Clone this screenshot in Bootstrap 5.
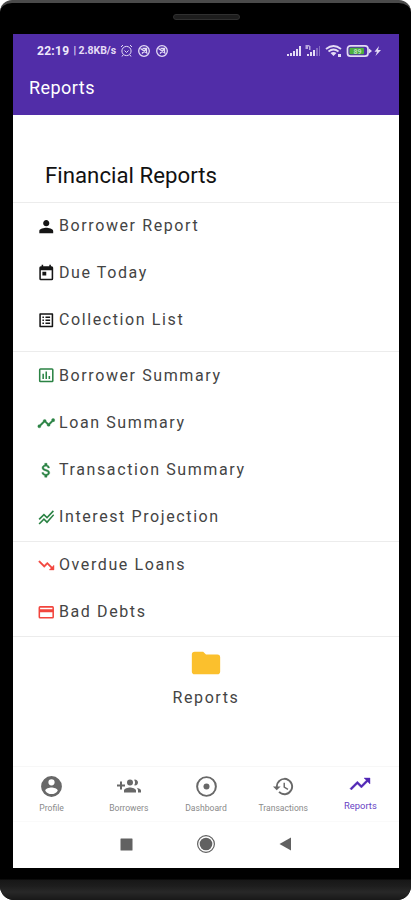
<!DOCTYPE html>
<html lang="en">
<head>
<meta charset="utf-8">
<meta name="viewport" content="width=device-width, initial-scale=1">
<title>Reports</title>
<link href="https://cdn.jsdelivr.net/npm/bootstrap@5.3.0/dist/css/bootstrap.min.css" rel="stylesheet">
<style>
body{font-family:Roboto,"Liberation Sans",sans-serif;background:#fff;color:#111}
svg{display:block;flex:none;fill:currentColor}
.phone{width:411px;height:900px;background:#000;border-radius:12px 12px 14px 14px;border-top:3px solid #4a4a4a;padding:0 12px 0 13px}
.earpiece{height:31px;padding-top:11px}
.speaker{width:67px;height:6px;border-radius:3px;background:#1d1d1d;border:1px solid #303030}
.screen{height:834px}
.app-head{height:81px;background:#512da8;color:#fff}
.status{height:33px;padding:0 18px 0 24px;color:#e4dcf5}
.clock{font-size:12px;font-weight:700;letter-spacing:.3px;color:#eee8fa}
.rate{font-size:10.5px;font-weight:700;letter-spacing:-.05px}
.app-title{font-size:18px;line-height:22px;padding:10px 16px 0;letter-spacing:.45px;font-weight:400;color:#fff}
.section-title{height:87.5px;padding:49px 32px 0;font-size:22.2px;line-height:22px;letter-spacing:.03px;margin:0;font-weight:400;border-bottom:1px solid #ececec}
.group{border-bottom:1px solid #ececec}
.group-a{height:149px}
.group-b{height:190px;padding-top:.6px}
.group-c{height:95px}
.line-item{height:47.2px;padding-left:24px;font-size:16px;letter-spacing:1.6px;color:#444}
.line-item svg{width:18.5px;height:18.5px;margin-right:3.5px}
.green{color:#2b8344}.red{color:#f2453d}.ink{color:#151515}
.folder-box{height:129px;padding-top:9px;font-size:16px;letter-spacing:1.6px;color:#444}
.folder-box svg{color:#fbc02d}
.folder-box span{line-height:20px;margin-top:8px}
.tabs{height:56px;border-top:1px solid #f7f7f7;border-bottom:1px solid #fafafa;color:#686868;font-size:8.6px}
.tabs .tab{flex:1 1 0;padding-top:7px}
.tabs .tab span{line-height:10px;margin-top:4px;color:#8a8a8a}
.tabs .tab.on{color:#5127b5;font-size:9.4px;padding-top:5px}
.tabs .tab.on span{color:#6743c4;margin-top:5px}
.sysnav{height:45px;color:#616161;padding:0 107px}
.chin{height:32px;margin:0 -12px 0 -13px;border-radius:0 0 14px 14px;background:linear-gradient(#000 0 11px,#171717 12px,#1d1d1d 18px,#282828 24px,#181818 32px)}
</style>
</head>
<body>
<div class="phone">
  <div class="earpiece d-flex justify-content-center"><div class="speaker"></div></div>
  <main class="screen bg-white d-flex flex-column">
    <header class="app-head">
      <div class="status d-flex align-items-center">
        <span class="clock">22:19</span><span class="rate ms-1">| 2.8KB/s</span>
        <svg class="ms-1" width="13" height="13" viewBox="0 0 13 13" style="fill:none" stroke="currentColor"><circle cx="6.5" cy="7" r="4.6"/><path d="M1 3l2-2M12 3l-2-2M4.500 6.500l2 2 2-2M3 11l-1 1.500M10 11l1 1.500"/></svg>
        <svg class="ms-1" width="14" height="14" viewBox="0 0 14 14" style="fill:none" stroke="currentColor" stroke-width="1.3"><circle cx="7" cy="7" r="5.3"/><path d="M3.500 4.500l7 5M5.500 4.500h4v4M8.800 5.500L5 9.500"/></svg>
        <svg class="ms-1" width="14" height="14" viewBox="0 0 14 14" style="fill:none" stroke="currentColor" stroke-width="1.3"><circle cx="7" cy="7" r="5.3"/><path d="M3.500 4.500l7 5M5.500 4.500h4v4M8.800 5.500L5 9.500"/></svg>
        <svg class="ms-auto" width="94" height="14" viewBox="0 0 94 14">
          <path d="M0 10h2v2H0zM3 9h2v3H3zM6 7h2v5H6zM9 5h2v7H9zM12 2h2v10h-2zM20 10h2v2h-2zM23 8h2v4h-2zM26 6h2v6h-2z"/>
          <path d="M29 4h2v8h-2zM32 2h1v10h-1z" opacity=".35"/>
          <path d="M18.500 1h4v1.500h-1.500V5h-2.500zM22 2h1.500v4H22z" opacity=".7"/>
          <path d="M39 5q7.500-6 15 0M41.500 7.500q5-4 10 0" fill="none" stroke="currentColor" stroke-width="1.800"/><path d="M43.500 9q3-2 6 0l-3 3zM51 10h3v3h-3z"/>
          <rect x="60.500" y="1.800" width="20.500" height="10.400" rx="3" fill="none" stroke="currentColor" stroke-width="1.700"/><path d="M82 4.500l3 2.500-3 2.500z"/>
          <rect x="62.500" y="3.700" width="14.500" height="6.600" rx="1" fill="#4caf3f"/><text x="66.500" y="9.500" font-size="7" font-weight="700" fill="#b9dfbb">89</text>
          <path d="M92 2l-4.500 5.700H90L88.500 12l5.500-6h-3z"/>
        </svg>
      </div>
      <div class="app-title">Reports</div>
    </header>

    <h1 class="section-title">Financial Reports</h1>

    <section class="group group-a">
      <div class="line-item d-flex align-items-center"><svg class="ink" viewBox="0 0 24 24"><path d="M12 12c2.200 0 4-1.800 4-4s-1.800-4-4-4-4 1.800-4 4 1.800 4 4 4zm0 2c-2.700 0-9 1.300-9 4v3h18v-3c0-2.700-6.300-4-9-4z"/></svg>Borrower Report</div>
      <div class="line-item d-flex align-items-center"><svg class="ink" viewBox="0 0 24 24"><path d="M19 3h-1V1h-2v2H8V1H6v2H5a2 2 0 0 0-2 2v14a2 2 0 0 0 2 2h14a2 2 0 0 0 2-2V5a2 2 0 0 0-2-2zm0 16H5V8h14v11zM7 10h5v5H7z"/></svg>Due Today</div>
      <div class="line-item d-flex align-items-center"><svg class="ink" viewBox="0 0 24 24"><path d="M19 5v14H5V5h14m1-2H4a1 1 0 0 0-1 1v16a1 1 0 0 0 1 1h16a1 1 0 0 0 1-1V4a1 1 0 0 0-1-1zm-9 4h6v2h-6V7zm0 4h6v2h-6v-2zm0 4h6v2h-6v-2zM7 7h2v2H7V7zm0 4h2v2H7v-2zm0 4h2v2H7v-2z"/></svg>Collection List</div>
    </section>

    <section class="group group-b">
      <div class="line-item d-flex align-items-center"><svg class="green" viewBox="0 0 24 24"><path d="M9 17H7v-7h2v7zm4 0h-2V7h2v10zm4 0h-2v-4h2v4zm2.500 2.100h-15V5h15v14.100zm0-16.100h-15a2 2 0 0 0-2 2v14a2 2 0 0 0 2 2h15a2 2 0 0 0 2-2V5a2 2 0 0 0-2-2z"/></svg>Borrower Summary</div>
      <div class="line-item d-flex align-items-center"><svg class="green" viewBox="0 0 24 24"><path d="M23 8a2 2 0 0 1-2.500 1.900L17 13.500a2 2 0 1 1-3.900 0L10.500 11a2 2 0 0 1-1 0L5 15.500A2 2 0 1 1 3.500 14L8 9.500a2 2 0 1 1 3.900 0l2.600 2.600a2 2 0 0 1 1 0L19.100 8.500A2 2 0 1 1 23 8z" stroke="currentColor" stroke-width=".5"/></svg>Loan Summary</div>
      <div class="line-item d-flex align-items-center"><svg class="green" viewBox="0 0 24 24"><path d="M11.800 10.900c-2.270-.59-3-1.200-3-2.150 0-1.090 1.010-1.850 2.700-1.850 1.780 0 2.440.85 2.500 2.100h2.210c-.07-1.720-1.120-3.300-3.210-3.810V3h-3v2.160c-1.940.42-3.500 1.680-3.500 3.610 0 2.310 1.910 3.460 4.700 4.130 2.500.6 3 1.480 3 2.410 0 .69-.49 1.790-2.700 1.790-2.060 0-2.870-.92-2.980-2.100h-2.200c.12 2.190 1.760 3.420 3.680 3.830V21h3v-2.150c1.950-.37 3.500-1.500 3.500-3.550 0-2.840-2.430-3.810-4.700-4.400z" stroke="currentColor" stroke-width=".5"/></svg>Transaction Summary</div>
      <div class="line-item d-flex align-items-center"><svg class="green" viewBox="0 0 24 24"><path d="M2 14l7-7 4 4 7.500-8L22 4.500 13 14l-4-4-5.500 5.500zM2 20l7-7 4 4 8-9 1.300 1.300L13 20l-4-4-5.500 5.500z"/></svg>Interest Projection</div>
    </section>

    <section class="group group-c">
      <div class="line-item d-flex align-items-center"><svg class="red" viewBox="0 0 24 24"><path d="M16 18l2.300-2.300-4.900-4.900-4 4L2 7.400 3.400 6l6 6 4-4 6.300 6.300L22 12v6z" stroke="currentColor" stroke-width=".6"/></svg>Overdue Loans</div>
      <div class="line-item d-flex align-items-center"><svg class="red" viewBox="0 0 24 24"><path d="M20 4H4a2 2 0 0 0-2 2v12a2 2 0 0 0 2 2h16a2 2 0 0 0 2-2V6a2 2 0 0 0-2-2zm0 14H4v-6h16v6zm0-10H4V6h16v2z"/></svg>Bad Debts</div>
    </section>

    <section class="folder-box d-flex flex-column align-items-center">
      <svg width="34" height="34" viewBox="0 0 24 24"><path d="M10 4H4a2 2 0 0 0-2 2v12a2 2 0 0 0 2 2h16a2 2 0 0 0 2-2V8a2 2 0 0 0-2-2h-8z"/></svg>
      <span>Reports</span>
    </section>

    <nav class="tabs d-flex text-center">
      <div class="tab d-flex flex-column align-items-center"><svg width="25" height="25" viewBox="0 0 24 24"><path d="M12 2a10 10 0 1 0 0 20 10 10 0 0 0 0-20zm0 3a3 3 0 1 1 0 6 3 3 0 0 1 0-6zm0 14.200a7.200 7.200 0 0 1-6-3.220c.03-1.990 4-3.080 6-3.080s5.970 1.090 6 3.080a7.200 7.200 0 0 1-6 3.220z"/></svg><span>Profile</span></div>
      <div class="tab d-flex flex-column align-items-center"><svg width="24" height="25" viewBox="0 0 24 24"><path d="M8 10H5V7H3v3H0v2h3v3h2v-3h3v-2zm10 1a3 3 0 1 0-.9-5.860 5 5 0 0 1 0 5.720c.28.090.59.140.9.140zm-5 0a3 3 0 1 0 0-6 3 3 0 0 0 0 6zm6.620 2.160c.83.730 1.380 1.660 1.380 2.840v2h3v-2c0-1.540-2.370-2.490-4.380-2.840zM13 13c-2 0-6 1-6 3v2h12v-2c0-2-4-3-6-3z"/></svg><span>Borrowers</span></div>
      <div class="tab d-flex flex-column align-items-center"><svg width="25" height="25" viewBox="0 0 24 24"><circle cx="12" cy="12" r="9" fill="none" stroke="currentColor" stroke-width="1.900"/><circle cx="12" cy="12" r="2.900"/></svg><span>Dashboard</span></div>
      <div class="tab d-flex flex-column align-items-center"><svg width="23" height="25" viewBox="0 0 24 24"><path d="M13 3a9 9 0 0 0-9 9H1l3.890 3.890.07.140L9 12H6a7 7 0 1 1 2.060 4.940l-1.420 1.420A9 9 0 1 0 13 3zm-1 5v5l4.280 2.540.72-1.210-3.500-2.080V8z"/></svg><span>Transactions</span></div>
      <div class="tab on d-flex flex-column align-items-center"><svg width="24" height="24" viewBox="0 0 24 24"><path d="M16 6l2.300 2.300-4.900 4.900-4-4L2 16.600 3.400 18l6-6 4 4 6.300-6.300L22 12V6z" stroke="currentColor" stroke-width=".4"/></svg><span>Reports</span></div>
    </nav>

    <div class="sysnav d-flex align-items-center justify-content-between">
      <svg width="13" height="13" viewBox="0 0 13 13"><rect x=".5" y=".5" width="12" height="12" rx=".5"/></svg>
      <svg width="20" height="20" viewBox="0 0 20 20"><circle cx="10" cy="10" r="8.400" fill="none" stroke="currentColor" stroke-width="1.200"/><circle cx="10" cy="10" r="6.300"/></svg>
      <svg width="13" height="14" viewBox="0 0 13 14"><path d="M12 .5v13L.5 7z"/></svg>
    </div>
  </main>
  <div class="chin"></div>
</div>
<script src="https://cdn.jsdelivr.net/npm/bootstrap@5.3.0/dist/js/bootstrap.bundle.min.js"></script>
</body>
</html>
